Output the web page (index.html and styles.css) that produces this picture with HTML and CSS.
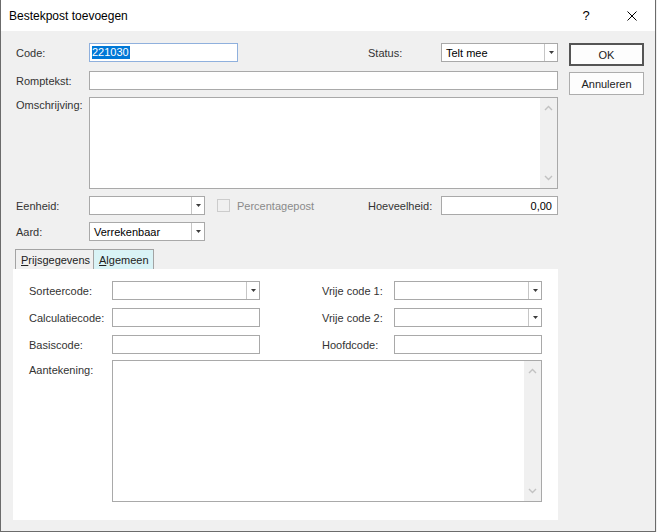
FILE: index.html
```html
<!DOCTYPE html>
<html lang="nl">
<head>
<meta charset="utf-8">
<title>Bestekpost toevoegen</title>
<link rel="stylesheet" href="styles.css">
</head>
<body>
<div class="window">
  <div class="titlebar">
    <span class="title">Bestekpost toevoegen</span>
    <span class="cap cap-help">?</span>
    <span class="cap cap-close"><svg width="10" height="10" viewBox="0 0 10 10"><path d="M0.5 0.5 L9.5 9.5 M9.5 0.5 L0.5 9.5" stroke="#000" stroke-width="1" fill="none"/></svg></span>
  </div>
  <div class="body">
    <div class="main">
      <div class="row r1">
        <span class="lbl">Code:</span>
        <div class="field focus w-code"><span class="sel">221030</span></div>
        <div class="spacer"></div>
        <span class="lbl lbl-r">Status:</span>
        <div class="combo w-right"><span class="val">Telt mee</span><span class="drop"><svg width="5" height="3" viewBox="0 0 5 3"><path d="M0 0 H5 L2.5 3 Z" fill="#3c3c3c"/></svg></span></div>
      </div>
      <div class="row r2">
        <span class="lbl">Romptekst:</span>
        <div class="field grow"></div>
      </div>
      <div class="row r3">
        <span class="lbl lbl-top">Omschrijving:</span>
        <div class="memo grow">
          <div class="memo-text"></div>
          <div class="vscroll">
            <svg width="9" height="6" viewBox="0 0 9 6"><path d="M1 5 L4.5 1.5 L8 5" stroke="#c2c2c2" stroke-width="1.4" fill="none"/></svg>
            <svg width="9" height="6" viewBox="0 0 9 6"><path d="M1 1 L4.5 4.5 L8 1" stroke="#c2c2c2" stroke-width="1.4" fill="none"/></svg>
          </div>
        </div>
      </div>
      <div class="row r4">
        <span class="lbl">Eenheid:</span>
        <div class="combo w-small"><span class="val"></span><span class="drop"><svg width="5" height="3" viewBox="0 0 5 3"><path d="M0 0 H5 L2.5 3 Z" fill="#3c3c3c"/></svg></span></div>
        <span class="check"></span>
        <span class="disabled">Percentagepost</span>
        <div class="spacer"></div>
        <span class="lbl lbl-r">Hoeveelheid:</span>
        <div class="field w-right num">0,00</div>
      </div>
      <div class="row r5">
        <span class="lbl">Aard:</span>
        <div class="combo w-small"><span class="val">Verrekenbaar</span><span class="drop"><svg width="5" height="3" viewBox="0 0 5 3"><path d="M0 0 H5 L2.5 3 Z" fill="#3c3c3c"/></svg></span></div>
      </div>
      <div class="tabs">
        <span class="tab tab-active"><u>P</u>rijsgegevens</span>
        <span class="tab tab-hover"><u>A</u>lgemeen</span>
      </div>
      <div class="panel">
        <span class="plbl">Sorteercode:</span>
        <div class="combo"><span class="val"></span><span class="drop"><svg width="5" height="3" viewBox="0 0 5 3"><path d="M0 0 H5 L2.5 3 Z" fill="#3c3c3c"/></svg></span></div>
        <span></span>
        <span class="plbl">Vrije code 1:</span>
        <div class="combo"><span class="val"></span><span class="drop"><svg width="5" height="3" viewBox="0 0 5 3"><path d="M0 0 H5 L2.5 3 Z" fill="#3c3c3c"/></svg></span></div>

        <span class="plbl">Calculatiecode:</span>
        <div class="field"></div>
        <span></span>
        <span class="plbl">Vrije code 2:</span>
        <div class="combo"><span class="val"></span><span class="drop"><svg width="5" height="3" viewBox="0 0 5 3"><path d="M0 0 H5 L2.5 3 Z" fill="#3c3c3c"/></svg></span></div>

        <span class="plbl">Basiscode:</span>
        <div class="field"></div>
        <span></span>
        <span class="plbl">Hoofdcode:</span>
        <div class="field"></div>

        <span class="plbl plbl-top">Aantekening:</span>
        <div class="memo memo-note">
          <div class="memo-text"></div>
          <div class="vscroll">
            <svg width="9" height="6" viewBox="0 0 9 6"><path d="M1 5 L4.5 1.5 L8 5" stroke="#c2c2c2" stroke-width="1.4" fill="none"/></svg>
            <svg width="9" height="6" viewBox="0 0 9 6"><path d="M1 1 L4.5 4.5 L8 1" stroke="#c2c2c2" stroke-width="1.4" fill="none"/></svg>
          </div>
        </div>
      </div>
    </div>
    <div class="buttons">
      <button class="btn btn-default" type="button">OK</button>
      <button class="btn" type="button">Annuleren</button>
    </div>
  </div>
</div>
</body>
</html>
```
FILE: styles.css
```css
* { box-sizing: border-box; }
html, body { margin: 0; padding: 0; }
body {
  width: 657px;
  height: 532px;
  overflow: hidden;
  background: #f0f0f0;
  font-family: "Liberation Sans", Arial, sans-serif;
  font-size: 11px;
  color: #333;
}
.window {
  width: 656px;
  height: 532px;
  border-left: 1px solid #6b6b6b;
  border-right: 1px solid #6b6b6b;
  border-bottom: 1px solid #6b6b6b;
  background: #f0f0f0;
  display: flex;
  flex-direction: column;
}
.titlebar {
  height: 31px;
  flex: none;
  background: #fff;
  display: flex;
  align-items: center;
}
.title {
  padding-left: 8px;
  font-size: 12px;
  color: #000;
  flex: 1;
}
.cap {
  width: 46px;
  height: 31px;
  display: flex;
  align-items: center;
  justify-content: center;
  color: #000;
}
.cap-help { font-size: 13px; padding-bottom: 1px; }

.body {
  display: flex;
  padding: 12px 0 0 12px;
  flex: 1;
}
.main {
  width: 545px;
  display: flex;
  flex-direction: column;
}
.row {
  display: flex;
  align-items: center;
  height: 19px;
}
.r2 { margin-top: 9px; }
.r3 { margin-top: 7px; height: 92px; align-items: stretch; }
.r4 { margin-top: 7px; }
.r5 { margin-top: 7px; }
.lbl {
  width: 76px;
  padding-left: 3px;
  flex: none;
  white-space: nowrap;
}
.lbl-r { width: 73px; padding-left: 0; }
.lbl-top { padding-top: 2px; }
.spacer { flex: 1; }
.grow { flex: 1; }

.field {
  height: 19px;
  background: #fff;
  border: 1px solid #a9a9a9;
  display: flex;
  align-items: center;
  color: #000;
}
.focus { border-color: #8fb0dd; padding-left: 2px; }
.w-code { width: 149px; flex: none; }
.w-right { width: 117px; flex: none; }
.w-small { width: 116px; flex: none; }
.sel {
  background: #0078d7;
  color: #fff;
  line-height: 13px;
  height: 13px;
  padding-right: 1px;
}
.num { justify-content: flex-end; padding-right: 5px; color: #000; }

.combo {
  height: 19px;
  background: #fff;
  border: 1px solid #a9a9a9;
  display: flex;
  align-items: stretch;
  color: #000;
}
.combo .val {
  flex: 1;
  display: flex;
  align-items: center;
  padding-left: 4px;
}
.combo .drop {
  width: 13px;
  flex: none;
  border-left: 1px solid #c6c6c6;
  display: flex;
  align-items: center;
  justify-content: center;
}

.memo {
  background: #fff;
  border: 1px solid #a9a9a9;
  display: flex;
}
.memo-text { flex: 1; }
.vscroll {
  width: 17px;
  flex: none;
  background: #f0f0f0;
  display: flex;
  flex-direction: column;
  align-items: center;
  justify-content: space-between;
  padding: 7px 0 7px;
}

.check {
  width: 13px;
  height: 13px;
  flex: none;
  border: 1px solid #cccccc;
  background: #f0f0f0;
  margin-left: 12px;
}
.disabled {
  margin-left: 7px;
  color: #8a8a8a;
  white-space: nowrap;
}

.tabs {
  margin-top: 8px;
  margin-left: 2px;
  display: flex;
  height: 20px;
}
.tab {
  height: 20px;
  border: 1px solid #a3a3a3;
  border-bottom: none;
  display: flex;
  align-items: center;
  padding-left: 5px;
  color: #222;
  white-space: nowrap;
}
.tab-active { width: 79px; background: #f0f0f0; }
.tab-hover { width: 60px; border-left: none; background: #d9f3f6; }

.panel {
  height: 251px;
  background: #fff;
  padding: 12px 16px 0 16px;
  display: grid;
  grid-template-columns: 83px 148px 62px 72px 148px;
  grid-template-rows: 19px 19px 19px 142px;
  row-gap: 8px;
  align-items: center;
  align-content: start;
}
.plbl { white-space: nowrap; }
.plbl-top { align-self: start; padding-top: 4px; margin-top: -2px; }
.memo-note {
  grid-column: 2 / 6;
  height: 142px;
  margin-top: -2px;
  align-self: start;
}

.buttons {
  margin-left: 11px;
  width: 75px;
  display: flex;
  flex-direction: column;
  gap: 6px;
}
.btn {
  height: 23px;
  width: 75px;
  border: 1px solid #adadad;
  background: #fdfdfd;
  font-family: "Liberation Sans", Arial, sans-serif;
  font-size: 11px;
  color: #222;
  padding: 0;
}
.btn-default { border: 2px solid #555; }
```
